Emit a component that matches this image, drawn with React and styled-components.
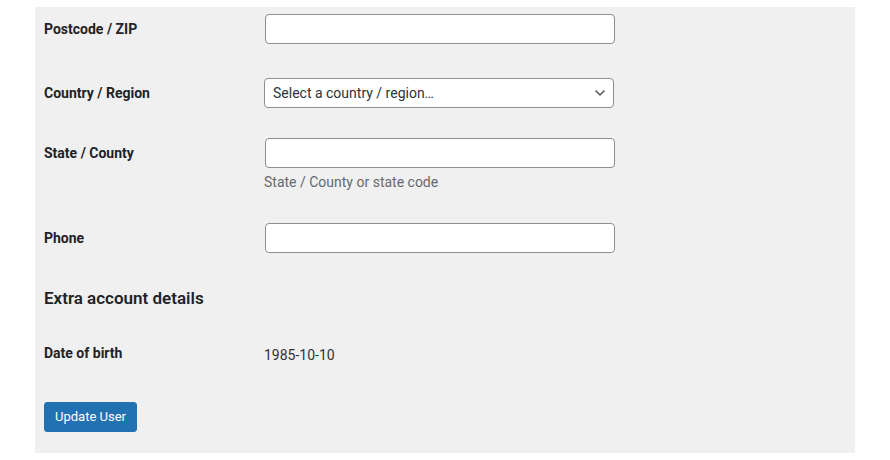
import React from 'react';
import styled, { createGlobalStyle } from 'styled-components';

const GlobalStyle = createGlobalStyle`
  html, body {
    margin: 0;
    padding: 0;
    background: #ffffff;
  }
  body {
    font-family: Roboto, "Liberation Sans", sans-serif;
    color: #1d2327;
  }
`;

const Page = styled.div`
  padding: 7px 35px 8px;
`;

const Panel = styled.div`
  background: #f0f0f1;
  padding: 7px 9px 21px;
  display: flex;
  flex-direction: column;
  align-items: flex-start;
`;

const Row = styled.div`
  display: grid;
  grid-template-columns: 220px 350px;
  align-items: start;
  margin-bottom: ${({ $after }) => $after}px;
`;

const Label = styled.label`
  font-size: 14px;
  font-weight: 700;
  line-height: 18px;
  padding-top: ${({ $top }) => ($top != null ? $top : 6)}px;
  color: #1d2327;
`;

const Field = styled.div`
  display: flex;
  flex-direction: column;
`;

const TextInput = styled.input`
  box-sizing: border-box;
  width: 350px;
  height: 30px;
  margin: 0 0 0 1px;
  padding: 0 8px;
  border: 1px solid #8c8f94;
  border-radius: 4px;
  background: #fff;
  font-family: Roboto, "Liberation Sans", sans-serif;
  font-size: 14px;
  color: #2c3338;
  outline: none;
`;

const SelectBox = styled.div`
  position: relative;
  box-sizing: border-box;
  width: 350px;
  height: 30px;
  border: 1px solid #8c8f94;
  border-radius: 4px;
  background: #fff;
  display: flex;
  align-items: center;
  padding: 0 24px 0 8px;
  font-size: 14px;
  color: #2c3338;
`;

const Chevron = styled.svg`
  position: absolute;
  right: 7px;
  top: 10px;
`;

const Description = styled.p`
  margin: 5px 0 0;
  font-size: 14px;
  line-height: 18px;
  color: #646970;
`;

const Heading = styled.h2`
  margin: 0 0 35px;
  font-size: 17px;
  font-weight: 600;
  line-height: 22px;
  color: #1d2327;
`;

const Value = styled.div`
  font-size: 14px;
  line-height: 18px;
  padding-top: 2px;
  color: #2c3338;
`;

const Button = styled.button`
  box-sizing: border-box;
  height: 30px;
  padding: 0 10px;
  border: 1px solid #2271b1;
  border-radius: 3px;
  background: #2271b1;
  color: #fff;
  font-family: Roboto, "Liberation Sans", sans-serif;
  font-size: 13px;
  line-height: 28px;
  cursor: pointer;
`;

export default function App() {
  return (
    <>
      <GlobalStyle />
      <Page>
        <Panel>
          <Row $after={34}>
            <Label>Postcode / ZIP</Label>
            <Field>
              <TextInput type="text" />
            </Field>
          </Row>
          <Row $after={30}>
            <Label>Country / Region</Label>
            <Field>
              <SelectBox>
                Select a country / region…
                <Chevron width="12" height="8" viewBox="0 0 12 8">
                  <path d="M1.5 1.5l4.5 4.5 4.5-4.5" fill="none" stroke="#50575e" strokeWidth="1.5" />
                </Chevron>
              </SelectBox>
            </Field>
          </Row>
          <Row $after={32}>
            <Label>State / County</Label>
            <Field>
              <TextInput type="text" />
              <Description>State / County or state code</Description>
            </Field>
          </Row>
          <Row $after={34}>
            <Label>Phone</Label>
            <Field>
              <TextInput type="text" />
            </Field>
          </Row>
          <Heading>Extra account details</Heading>
          <Row $after={38}>
            <Label $top={0}>Date of birth</Label>
            <Value>1985-10-10</Value>
          </Row>
          <Button>Update User</Button>
        </Panel>
      </Page>
    </>
  );
}
